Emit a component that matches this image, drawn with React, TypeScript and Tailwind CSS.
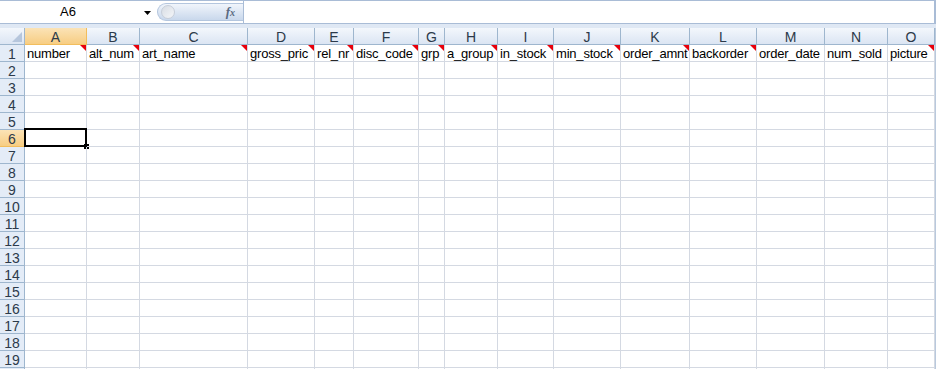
import React from 'react';

const cols = [
  { l: 'A', name: 'number', c: true },
  { l: 'B', name: 'alt_num', c: true },
  { l: 'C', name: 'art_name', c: true },
  { l: 'D', name: 'gross_pric', c: true },
  { l: 'E', name: 'rel_nr', c: true },
  { l: 'F', name: 'disc_code', c: true },
  { l: 'G', name: 'grp', c: true },
  { l: 'H', name: 'a_group', c: true },
  { l: 'I', name: 'in_stock', c: true },
  { l: 'J', name: 'min_stock', c: true },
  { l: 'K', name: 'order_amnt', c: true },
  { l: 'L', name: 'backorder', c: true },
  { l: 'M', name: 'order_date', c: false },
  { l: 'N', name: 'num_sold', c: false },
  { l: 'O', name: 'picture', c: true },
];

const rows = Array.from({ length: 20 }, (_, i) => i + 1);

const headCls =
  'flex h-[17px] items-center justify-center border-r border-b pt-[2px] text-[14px] leading-none text-[#2c3a4a]';
const colHead = headCls + ' border-[#9eb6ce] bg-gradient-to-b from-[#f3f7fc] to-[#dbe5f3]';
const rowHead = headCls + ' border-[#9eb6ce] bg-[#e4ecf7]';
const activeHead = headCls + ' border-[#f2bd5c] bg-gradient-to-b from-[#fbe3b6] to-[#f7cd82]';

const FormulaBar = () => (
  <div className="flex h-[24px] border-t border-b border-[#a9bcd6] bg-white">
    <div className="relative flex w-[157px] items-center">
      <span className="w-[136px] text-center text-[13px] text-black">A6</span>
      <svg width="8" height="5" className="absolute left-[144px] top-[10px]">
        <path d="M0 0 L7 0 L3.5 4 Z" fill="#000" />
      </svg>
    </div>
    <div className="my-[2px] flex w-[86px] items-center justify-between rounded-l-full border border-r-0 border-[#b4c6de] bg-gradient-to-b from-[#f1f5fb] to-[#c9d8ec] pl-[3px] pr-[8px]">
      <span className="h-[14px] w-[14px] rounded-full border border-[#c7ced9] bg-gradient-to-br from-[#d8dde4] to-[#f4f6f9]"></span>
      <span className="font-['Liberation_Serif',serif] text-[13px] font-bold italic text-[#5a6a80]">
        f<span className="text-[10px]">x</span>
      </span>
    </div>
    <div className="flex-1 border-r-2 border-l border-[#a9bcd6] bg-white"></div>
  </div>
);

const App = () => {
  return (
    <div className="h-[369px] w-[936px] overflow-hidden bg-white font-['Liberation_Sans',Arial,sans-serif]">
      <FormulaBar />
      <div className="h-[4px] bg-[#dfe8f4]"></div>
      <div className="grid grid-cols-[25px_62px_53px_108px_67px_39px_65px_26px_53px_56px_67px_69px_67px_68px_63px_47px_1fr]">
        {/* column headers */}
        <div className="relative h-[17px] border-r border-b border-[#9eb6ce] bg-gradient-to-b from-[#f3f7fc] to-[#dbe5f3]">
          <svg width="10" height="10" className="absolute right-[2px] bottom-[2px]">
            <path d="M10 0 L10 10 L0 10 Z" fill="#b6c6dc" />
          </svg>
        </div>
        {cols.map((c) => (
          <div key={c.l} className={c.l === 'A' ? activeHead : colHead}>
            {c.l}
          </div>
        ))}
        <div className="border-l-2 border-[#b9c9dd] bg-[#e9eff7]"></div>

        {rows.map((r) => (
          <React.Fragment key={r}>
            <div className={r === 6 ? activeHead : rowHead}>{r < 20 ? r : null}</div>
            {cols.map((c) => (
              <div
                key={c.l}
                className="relative h-[17px] overflow-visible whitespace-nowrap border-r border-b border-[#d4d9e2] pt-[1px] pl-[2px] text-[13px] leading-[16px] tracking-[-0.2px] text-black"
              >
                {r === 1 ? c.name : null}
                {r === 1 && c.c ? (
                  <svg width="6" height="6" className="absolute top-0 right-0">
                    <path d="M0 0 L6 0 L6 6 Z" fill="#e8000b" />
                  </svg>
                ) : null}
                {r === 6 && c.l === 'A' ? (
                  <>
                    <div className="absolute top-[-2px] left-[-1px] h-[19px] w-[63px] border-2 border-black"></div>
                    <div className="absolute right-[-3px] bottom-[-3px] h-[5px] w-[5px] bg-black"></div>
                  </>
                ) : null}
              </div>
            ))}
            <div className="border-l-2 border-[#b9c9dd] bg-[#e9eff7]"></div>
          </React.Fragment>
        ))}
      </div>
    </div>
  );
};

export default App;
